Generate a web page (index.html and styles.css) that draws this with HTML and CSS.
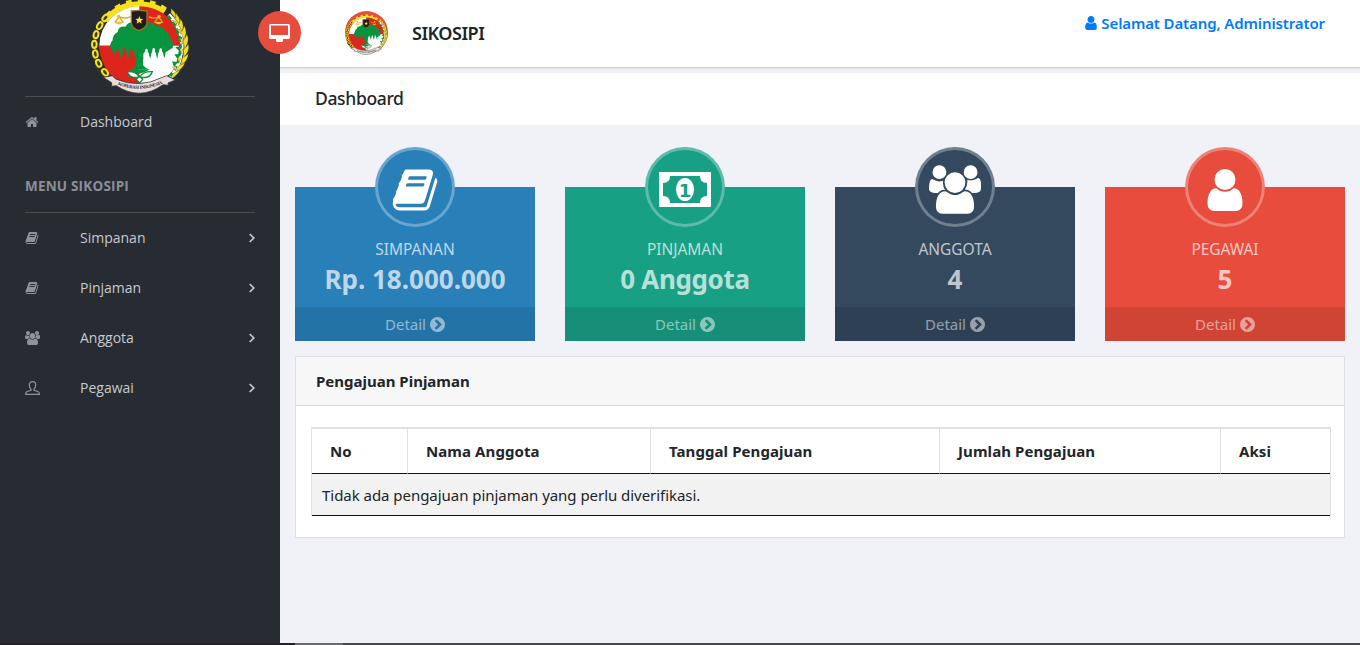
FILE: index.html
```html
<!DOCTYPE html>
<html lang="id">
<head>
<meta charset="utf-8">
<title>SIKOSIPI</title>
<link rel="stylesheet" href="styles.css">
</head>
<body>
<svg class="defs" width="0" height="0" aria-hidden="true">
  <symbol id="emblem" viewBox="30 -6 300 288">
    <!-- gear rim -->
    <path d="M76 62 Q112 14 178 12 Q222 13 253 36" fill="none" stroke="#3b3a20" stroke-width="20"/>
    <path d="M76 62 Q112 14 178 12 Q222 13 253 36" fill="none" stroke="#f6e11c" stroke-width="16"/>
    <path d="M82 50 Q118 7 178 5 Q224 6 257 31" fill="none" stroke="#f6e11c" stroke-width="17" stroke-dasharray="17 18"/>
    <!-- shield field -->
    <path d="M180 19 A122 118 0 0 0 58 137 H180 Z" fill="#fff"/>
    <path d="M178 19 V138 H303 A124 119 0 0 0 178 19Z" fill="#dd251d"/>
    <path d="M56 137 H180 V251 Q70 257 56 137Z" fill="#dd251d"/>
    <path d="M178 137 H304 Q296 251 178 251Z" fill="#fff"/>
    <!-- banyan tree -->
    <path d="M113 96 Q115 78 136 80 Q144 67 158 67 H205 Q219 68 229 78 Q248 77 255 93 Q269 98 269 113 Q284 129 278 143 L264 152 L260 178 H189 V196 Q196 205 209 209 H149 Q163 205 167 196 V180 H107 L102 154 L95 153 L90 136 Q92 126 98 121 Q98 103 113 96Z" fill="#07943f"/>
    <path d="M104 200 V166 Q106 160 109 158 Q107 147 113 146 Q119 147 117 158 Q121 160 122 172 L125 184 L127 166 Q127 158 130 156 Q129 145 134 144 Q140 145 138 156 Q142 159 142 169 L144 180 L147 166 Q147 159 150 156 Q149 147 154 146 Q160 147 158 156 Q164 160 166 175 V198 L150 206 H120Z" fill="#dd251d"/>
    <path d="M190 186 V162 Q192 157 195 155 Q194 147 199 146 Q205 147 203 155 Q207 158 208 168 L211 176 L213 164 Q214 158 217 155 Q216 145 221 144 Q227 145 225 155 Q229 158 229 167 L232 176 L234 163 Q235 157 238 154 Q237 145 242 144 Q247 145 246 154 Q250 157 251 168 L254 174 L257 156 L264 153 L263 186Z" fill="#fff"/>
    <path d="M147 209 L209 209 L194 216 L178 221 L160 216Z" fill="#07943f"/>
    <path d="M142 215 Q170 214 177 231 Q150 238 142 215Z M217 215 Q187 214 180 231 Q209 238 217 215Z M178 228 L188 238 L179 249 L169 238Z" fill="#fff" stroke="#07943f" stroke-width="4"/>
    <!-- chain -->
    <path d="M75 55 L48 99 L41 151 L50 201 L83 239" fill="none" stroke="#39381d" stroke-width="9"/>
    <g fill="#39381d" stroke="#f6e11c" stroke-width="6">
      <ellipse cx="76" cy="54" rx="7" ry="11" transform="rotate(40 76 54)"/>
      <ellipse cx="59" cy="77" rx="7" ry="11" transform="rotate(28 59 77)"/>
      <ellipse cx="48" cy="104" rx="7" ry="11" transform="rotate(14 48 104)"/>
      <ellipse cx="43" cy="133" rx="7" ry="11"/>
      <ellipse cx="46" cy="162" rx="7" ry="11" transform="rotate(-9 46 162)"/>
      <ellipse cx="56" cy="190" rx="7" ry="11" transform="rotate(-24 56 190)"/>
      <ellipse cx="75" cy="217" rx="7" ry="11" transform="rotate(-40 75 217)"/>
    </g>
    <!-- cotton and rice -->
    <path d="M266 44 Q316 94 303 160 Q297 203 271 232" fill="none" stroke="#fff" stroke-width="11"/>
    <path d="M264 48 Q310 98 299 160 Q293 203 270 229" fill="none" stroke="#07943f" stroke-width="8" stroke-dasharray="13 10"/>
    <path d="M276 66 l16 3 -8 14z M285 88 l17 1 -8 15z M291 113 l17 -3 -6 17z M286 142 l20 -5 -6 18z M283 163 l20 -1 -10 16z M276 184 l18 3 -12 14z" fill="#07943f"/>
    <path d="M274 35 Q326 101 313 165 Q303 213 269 239" fill="none" stroke="#e8da20" stroke-width="5"/>
    <path d="M274 39 L273 26 Q290 38 288 54Z M286 56 L288 40 Q302 55 299 71Z M296 76 L302 57 Q314 75 306 93Z M304 98 L313 78 Q324 99 311 117Z M309 125 L321 103 Q330 124 315 143Z M310 151 L325 133 Q330 154 312 170Z M306 176 L325 161 Q323 183 304 195Z M295 199 L315 187 Q309 207 290 214Z M281 219 L301 209 Q290 229 271 235Z M276 61 L288 64 L291 77Z M290 87 L300 89 L303 103Z M298 115 L307 117 L308 132Z M299 145 L308 147 L305 162Z M292 173 L302 174 L297 189Z M278 202 L289 198 L287 212Z" fill="#f6e11c" stroke="#5b5618" stroke-width="1"/>
    <!-- scales -->
    <path d="M117 50 Q136 58 152 50 M207 50 Q220 58 236 51 M117 51 L105 67 M118 51 L129 67 M236 51 L224 67 M236 51 L248 67" fill="none" stroke="#d9a915" stroke-width="4"/>
    <path d="M104 66 H131 Q117 79 104 66Z M222 66 H249 Q236 79 222 66Z" fill="#f5cd22" stroke="#b58c0e"/>
    <circle cx="116" cy="49" r="5" fill="#efc01a"/><circle cx="237" cy="49" r="5" fill="#efc01a"/>
    <!-- star shield -->
    <path d="M154 33 Q178 29 201 33 V69 Q200 83 177 92 Q154 84 154 69Z" fill="#231b20" stroke="#927c1e" stroke-width="4"/>
    <path d="M178 48 L181 56 L190 57 L183 62 L185 71 L178 66 L170 71 L172 62 L166 57 L175 56Z" fill="#ffe44b"/>
    <!-- ribbon -->
    <path d="M70 232 L97 227 L107 237 Q178 267 247 232 L260 227 L286 240 L264 249 L265 256 L249 254 Q180 304 109 257 L95 259 V248Z" fill="#e6dede" stroke="#413438" stroke-width="2.5"/>
    <path id="motto" d="M106 251 Q180 284 254 247" fill="none"/>
    <text class="motto"><textPath href="#motto" startOffset="50%">KOPERASI INDONESIA</textPath></text>
  </symbol>
  <symbol id="book" viewBox="0 0 1792 1792"><path d="M1703 478q40 57 18 129l-275 906q-19 64-76.500 107.500t-122.500 43.500h-923q-77 0-148.500-53.500t-99.500-131.500q-24-67-2-127 0-4 3-27t4-37q1-8-3-21.500t-3-19.500q2-11 8-21t16.500-23.500 16.500-23.500q23-38 45-91.500t30-91.500q3-10 .5-30t-.5-28q3-11 17-28t17-23q21-36 42-92t25-90q1-9-2.500-32t.5-28q4-13 22-30.500t22-22.500q19-26 42.500-84.500t27.500-96.500q1-8-3-25.500t-2-26.500q2-8 9-18t18-23 17-21q8-12 16.500-30.500t15-35 16-36 19.500-32 26.500-23.500 36-11.500 47.500 5.500l-1 3q38-9 51-9h761q74 0 114 56t18 130l-274 906q-36 119-71.500 153.500t-128.500 34.500h-869q-27 0-38 15-11 16-1 43 24 70 144 70h923q29 0 56-15.500t35-41.500l300-987q7-22 5-57 38 15 59 43zm-1064 2q-4 13 2 22.500t20 9.500h608q13 0 25.500-9.500t16.500-22.500l21-64q4-13-2-22.500t-20-9.500h-608q-13 0-25.500 9.500t-16.500 22.500zm-83 256q-4 13 2 22.500t20 9.500h608q13 0 25.500-9.500t16.500-22.500l21-64q4-13-2-22.500t-20-9.500h-608q-13 0-25.500 9.500t-16.500 22.500z"/></symbol>
  <symbol id="users" viewBox="0 0 1920 1792"><path d="M593 896q-162 5-265 128h-134q-82 0-138-40.500t-56-118.500q0-353 124-353 6 0 43.500 21t97.500 42.500 119 21.500q67 0 133-23-5 37-5 66 0 159 90 294zm1071 637q0 120-73 189.500t-194 69.500h-874q-121 0-194-69.500t-73-189.500q0-53 3.500-103.500t14-109 26.500-108.500 43-97.500 62-81 85.500-53.500 111.500-20q10 0 43 21.500t73 48 107 48 135 21.500 135-21.500 107-48 73-48 43-21.500q61 0 111.500 20t85.500 53.500 62 81 43 97.500 26.500 108.500 14 109 3.500 103.500zm-1024-1277q0 106-75 181t-181 75-181-75-75-181 75-181 181-75 181 75 75 181zm704 384q0 159-112.500 271.500t-271.500 112.500-271.500-112.500-112.500-271.500 112.500-271.500 271.500-112.500 271.500 112.500 112.500 271.500zm576 225q0 78-56 118.500t-138 40.500h-134q-103-123-265-128 90-135 90-294 0-29-5-66 66 23 133 23 59 0 119-21.500t97.500-42.500 43.500-21q124 0 124 353zm-128-609q0 106-75 181t-181 75-181-75-75-181 75-181 181-75 181 75 75 181z"/></symbol>
  <symbol id="user" viewBox="256 128 1280 1536"><path d="M1536 1399q0 109-62.500 187t-150.500 78h-854q-88 0-150.500-78t-62.500-187q0-85 8.500-160.500t31.500-152 58.500-131 94-89 134.500-34.500q131 128 313 128t313-128q76 0 134.500 34.500t94 89 58.500 131 31.500 152 8.500 160.500zm-256-887q0 159-112.500 271.500t-271.500 112.500-271.500-112.500-112.500-271.500 112.500-271.500 271.500-112.500 271.500 112.500 112.500 271.500z"/></symbol>
  <symbol id="home" viewBox="0 0 1792 1792"><path d="M1472 992v480q0 26-19 45t-45 19h-384v-384h-256v384h-384q-26 0-45-19t-19-45v-480q0-1 .5-3t.5-3l575-474 575 474q1 2 1 6zm223-69l-62 74q-8 9-21 11h-3q-13 0-21-7l-692-577-692 577q-12 8-24 7-13-2-21-11l-62-74q-8-10-7-23.500t11-21.500l719-599q32-26 76-26t76 26l244 204v-195q0-14 9-23t23-9h192q14 0 23 9t9 23v408l219 182q10 8 11 21.500t-7 23.500z"/></symbol>
  <symbol id="go" viewBox="128 128 1536 1536"><path d="M845 1395l454-454q19-19 19-45t-19-45l-454-454q-19-19-45-19t-45 19l-102 102q-19 19-19 45t19 45l307 307-307 307q-19 19-19 45t19 45l102 102q19 19 45 19t45-19zm819-499q0 209-103 385.500t-279.500 279.500-385.500 103-385.500-103-279.500-279.500-103-385.500 103-385.500 279.500-279.500 385.500-103 385.500 103 279.500 279.500 103 385.500z"/></symbol>
  <symbol id="chev" viewBox="0 0 8 10"><path d="M1.700 1 L5.800 5 L1.700 9" fill="none" stroke="currentColor" stroke-width="1.700"/></symbol>
</svg>
<div class="app">
  <aside class="sidebar">
    <div class="brand"><svg class="brand-logo"><use href="#emblem"/></svg></div>
    <a class="item first"><svg class="ico"><use href="#home"/></svg><span>Dashboard</span></a>
    <h3 class="menu-title">MENU SIKOSIPI</h3>
    <nav class="menu">
      <a class="item"><svg class="ico"><use href="#book"/></svg><span>Simpanan</span><svg class="chev"><use href="#chev"/></svg></a>
      <a class="item"><svg class="ico"><use href="#book"/></svg><span>Pinjaman</span><svg class="chev"><use href="#chev"/></svg></a>
      <a class="item"><svg class="ico wide"><use href="#users"/></svg><span>Anggota</span><svg class="chev"><use href="#chev"/></svg></a>
      <a class="item"><svg class="ico wide" viewBox="0 0 15 14"><path d="M7.500 .6C5.500 .6 4.300 2 4.300 4C4.300 5.800 5 7.300 6 8.100V9.200L2.100 10.500Q.7 11.100 .6 13.400H14.400Q14.300 11.100 12.900 10.500L9 9.200V8.100C10 7.300 10.700 5.800 10.700 4C10.700 2 9.500 .6 7.500 .6Z" fill="none" stroke="currentColor" stroke-width="1.200"/></svg><span>Pegawai</span><svg class="chev"><use href="#chev"/></svg></a>
    </nav>
  </aside>
  <main class="main">
    <header class="header">
      <a class="toggle"><svg width="21" height="18" viewBox="0 0 21 18"><path fill="#fff" fill-rule="evenodd" d="M1.500 0H19.500Q21 0 21 1.500V13.500Q21 15 19.500 15H14V17H13.500V18H7.500V17H7V15H1.500Q0 15 0 13.500V1.500Q0 0 1.500 0ZM2 1.500V11H19V1.500Z"/></svg></a>
      <span class="round"><svg class="round-logo"><use href="#emblem"/></svg></span>
      <span class="name">SIKOSIPI</span>
      <a class="welcome"><svg class="welcome-ico"><use href="#user"/></svg><span>Selamat Datang, Administrator</span></a>
    </header>
    <div class="title"><h1>Dashboard</h1></div>
    <section class="tiles">
      <article class="tile blue"><div class="disc"><svg width="48" height="48"><use href="#book"/></svg></div><div class="label">SIMPANAN</div><div class="value">Rp. 18.000.000</div><a class="detail"><span>Detail</span><svg><use href="#go"/></svg></a></article>
      <article class="tile green"><div class="disc"><svg width="52" height="35" viewBox="0 0 52 35"><path fill-rule="evenodd" d="M1 0H51Q52 0 52 1V34Q52 35 51 35H1Q0 35 0 34V1Q0 0 1 0ZM11 4Q11 11 4 11V24Q11 24 11 31H41Q41 24 48 24V11Q41 11 41 4Z"/><ellipse cx="26" cy="17.500" rx="9" ry="11.500"/><text class="note" x="26" y="24.500">1</text></svg></div><div class="label">PINJAMAN</div><div class="value wide-value">0 Anggota</div><a class="detail"><span>Detail</span><svg><use href="#go"/></svg></a></article>
      <article class="tile navy"><div class="disc"><svg width="52" height="49"><use href="#users"/></svg></div><div class="label">ANGGOTA</div><div class="value">4</div><a class="detail"><span>Detail</span><svg><use href="#go"/></svg></a></article>
      <article class="tile red"><div class="disc"><svg width="36" height="42"><use href="#user"/></svg></div><div class="label">PEGAWAI</div><div class="value">5</div><a class="detail"><span>Detail</span><svg><use href="#go"/></svg></a></article>
    </section>
    <section class="card">
      <div class="card-head">Pengajuan Pinjaman</div>
      <div class="card-body">
        <table class="table">
          <colgroup><col class="c1"><col class="c2"><col class="c3"><col class="c4"><col class="c5"></colgroup>
          <thead><tr><th>No</th><th>Nama Anggota</th><th>Tanggal Pengajuan</th><th>Jumlah Pengajuan</th><th>Aksi</th></tr></thead>
          <tbody><tr><td colspan="5">Tidak ada pengajuan pinjaman yang perlu diverifikasi.</td></tr></tbody>
        </table>
      </div>
    </section>
  </main>
</div>
<footer class="strip"><i class="strip-a"></i><i class="strip-b"></i><i class="strip-c"></i></footer>
</body>
</html>
```
FILE: styles.css
```css
* { box-sizing: border-box; }
body { margin: 0; height: 645px; overflow: hidden; display: flex; flex-direction: column; background: #f1f2f7; color: #212529; font-family: "Noto Sans", "Open Sans", sans-serif; font-size: 15px; }
.defs { position: absolute; }
svg { display: block; fill: currentColor; flex: none; }
.motto { font: bold 14px "Liberation Serif", serif; fill: #30292c; text-anchor: middle; letter-spacing: -1px; }
.app { display: flex; height: 643px; }

.sidebar { width: 280px; flex: none; background: #272c33; padding: 0 25px; font-family: "Open Sans", sans-serif; font-size: 14px; }
.brand { height: 97px; border-bottom: 1px solid #4e4e52; overflow: hidden; }
.brand-logo { width: 100px; height: 96px; margin: -2px auto 0; }
.item { display: flex; align-items: center; height: 50px; color: #c8c9ce; }
.item span { flex: 1; padding-bottom: 2px; }
.ico { width: 14px; height: 14px; margin-right: 41px; color: #8b939b; }
.ico.wide { width: 15px; margin-right: 40px; }
.chev { width: 8px; height: 10px; margin-right: -1px; }
.menu-title { margin: 0; height: 66px; padding-top: 30px; border-bottom: 1px solid #4e4e52; color: #8b8f9a; font-size: 13.500px; letter-spacing: .2px; font-weight: 700; line-height: 19px; }

.main { flex: 1; min-width: 0; }
.header { height: 68px; background: #fff; border-bottom: 1px solid #d0d0d5; box-shadow: 0 1px 2px rgba(0,0,0,.06); display: flex; align-items: flex-start; padding-right: 35px; }
.toggle { width: 43px; height: 43px; margin: 11px 0 0 -22px; border-radius: 50%; background: #e84c3d; display: flex; align-items: center; justify-content: center; position: relative; }
.round { width: 43px; height: 43px; margin: 11px 0 0 44px; border-radius: 50%; background: #e84c3d; }
.round-logo { width: 43px; height: 41px; margin-top: 3px; }
.name { margin: 21px 0 0 24px; font-size: 18px; letter-spacing: -.5px; line-height: 25px; font-weight: 600; }
.welcome { margin: 12px 0 0 auto; display: flex; align-items: center; gap: 4px; line-height: 22px; font-size: 15px; letter-spacing: -.12px; font-weight: 600; color: #007bff; }
.welcome-ico { width: 12px; height: 14px; }
.title { margin-top: 5px; height: 52px; background: #fff; padding: 0 35px 2px; display: flex; align-items: center; }
.title h1 { margin: 0; font-size: 17.500px; letter-spacing: -.35px; font-weight: 500; }

.tiles { display: grid; grid-template-columns: repeat(4, 1fr); gap: 30px; padding: 62px 15px 0; }
.tile { height: 154px; display: flex; flex-direction: column; align-items: center; color: rgba(255,255,255,.7); }
.disc { width: 80px; height: 80px; margin-top: -40px; padding-top: 5px; flex: none; border-radius: 50%; border: 3px solid rgba(255,255,255,.3); color: #fff; display: flex; align-items: center; justify-content: center; }
.blue, .blue .disc { background-color: #2980b9; }
.green, .green .disc { background-color: #18a085; }
.navy, .navy .disc { background-color: #34495e; }
.red, .red .disc { background-color: #e84c3d; }
.note { font: bold 18px "DejaVu Sans", sans-serif; text-anchor: middle; fill: #18a085; }
.label { margin-top: 10px; line-height: 24px; font-size: 15.500px; letter-spacing: -.05px; }
.value { line-height: 37px; font-size: 26px; font-weight: 700; }
.wide-value { letter-spacing: -.35px; }
.detail { margin-top: auto; width: 100%; height: 34px; background: rgba(0,0,0,.1); color: rgba(255,255,255,.5); display: flex; align-items: center; justify-content: center; gap: 4px; font-size: 15px; }
.detail svg { width: 15px; height: 15px; }

.card { margin: 15px 15px 0; height: 182px; background: #fff; border: 1px solid #dfdfe0; }
.card-head { height: 49px; padding-left: 20px; line-height: 48px; background: #f7f7f7; border-bottom: 1px solid #d8d8d8; font-weight: 700; font-size: 15px; }
.card-body { padding: 21px 13px 0 15px; }
.table { width: 1020px; table-layout: fixed; border-spacing: 0; border: solid #dee2e6; border-width: 2px 1px 0; }
.c1 { width: 96px; }
.c2 { width: 243px; }
.c3 { width: 289px; }
.c4 { width: 281px; }
th { height: 45px; padding: 0 18px; text-align: left; border-bottom: 1px solid #111; border-right: 1px solid #dee2e6; font-weight: 700; letter-spacing: .08px; }
th:last-child { border-right: 0; }
td { height: 42px; padding: 0 10px; background: #f2f2f2; border-bottom: 1px solid #111; letter-spacing: -.04px; }

.strip { height: 2px; display: flex; }
.strip-a { width: 295px; background: #262223; }
.strip-b { width: 48px; background: #6b686b; }
.strip-c { flex: 1; background: #4b484b; }
```
